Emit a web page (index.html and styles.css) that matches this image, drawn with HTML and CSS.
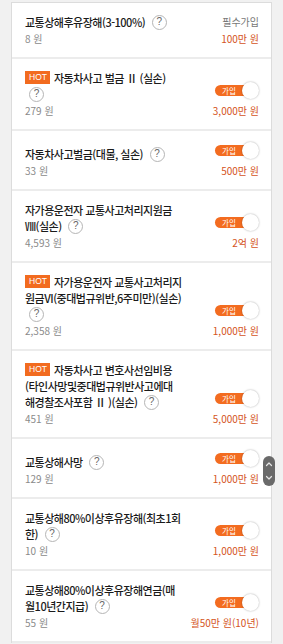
FILE: index.html
```html
<!DOCTYPE html>
<html lang="ko">
<head>
<meta charset="utf-8">
<title>특약 목록</title>
<link rel="stylesheet" href="styles.css">
</head>
<body>
<div class="card">
  <div class="row">
    <div class="info">
      <div class="title">교통상해후유장해(3-100%) <span class="help">?</span></div>
      <div class="price">8 원</div>
    </div>
    <div class="side">
      <div class="required">필수가입</div>
      <div class="amount">100만 원</div>
    </div>
  </div>

  <div class="row">
    <div class="info">
      <div class="title"><span class="hot">HOT</span>자동차사고 벌금 Ⅱ (실손) <span class="help">?</span></div>
      <div class="price">279 원</div>
    </div>
    <div class="side">
      <div class="toggle"><span class="pill">가입</span><span class="knob"></span></div>
      <div class="amount amount-t">3,000만 원</div>
    </div>
  </div>

  <div class="row">
    <div class="info">
      <div class="title">자동차사고벌금(대물, 실손) <span class="help">?</span></div>
      <div class="price">33 원</div>
    </div>
    <div class="side">
      <div class="toggle"><span class="pill">가입</span><span class="knob"></span></div>
      <div class="amount amount-t">500만 원</div>
    </div>
  </div>

  <div class="row">
    <div class="info">
      <div class="title">자가용운전자 교통사고처리지원금Ⅷ(실손) <span class="help">?</span></div>
      <div class="price">4,593 원</div>
    </div>
    <div class="side">
      <div class="toggle"><span class="pill">가입</span><span class="knob"></span></div>
      <div class="amount amount-t">2억 원</div>
    </div>
  </div>

  <div class="row">
    <div class="info">
      <div class="title"><span class="hot">HOT</span>자가용운전자 교통사고처리지원금VI(중대법규위반,6주미만)(실손) <span class="help">?</span></div>
      <div class="price">2,358 원</div>
    </div>
    <div class="side">
      <div class="toggle"><span class="pill">가입</span><span class="knob"></span></div>
      <div class="amount amount-t">1,000만 원</div>
    </div>
  </div>

  <div class="row">
    <div class="info">
      <div class="title"><span class="hot">HOT</span>자동차사고 변호사선임비용(타인사망및중대법규위반사고에대해경찰조사포함 Ⅱ )(실손) <span class="help">?</span></div>
      <div class="price">451 원</div>
    </div>
    <div class="side">
      <div class="toggle"><span class="pill">가입</span><span class="knob"></span></div>
      <div class="amount amount-t">5,000만 원</div>
    </div>
  </div>

  <div class="row">
    <div class="info">
      <div class="title">교통상해사망 <span class="help">?</span></div>
      <div class="price">129 원</div>
    </div>
    <div class="side">
      <div class="toggle"><span class="pill">가입</span><span class="knob"></span></div>
      <div class="amount amount-t">1,000만 원</div>
    </div>
  </div>

  <div class="row">
    <div class="info">
      <div class="title">교통상해80%이상후유장해(최초1회한) <span class="help">?</span></div>
      <div class="price">10 원</div>
    </div>
    <div class="side">
      <div class="toggle"><span class="pill">가입</span><span class="knob"></span></div>
      <div class="amount amount-t">1,000만 원</div>
    </div>
  </div>

  <div class="row">
    <div class="info">
      <div class="title">교통상해80%이상후유장해연금(매월10년간지급) <span class="help">?</span></div>
      <div class="price">55 원</div>
    </div>
    <div class="side">
      <div class="toggle"><span class="pill">가입</span><span class="knob"></span></div>
      <div class="amount amount-t">월50만 원(10년)</div>
    </div>
  </div>
</div>

<div class="scroll-thumb">
  <svg width="12" height="30" viewBox="0 0 12 30">
    <path d="M3.5 9.5 L6 7 L8.5 9.5" fill="none" stroke="#e6e6e6" stroke-width="1.2" stroke-linecap="round" stroke-linejoin="round"/>
    <path d="M3.5 20.5 L6 23 L8.5 20.5" fill="none" stroke="#e6e6e6" stroke-width="1.2" stroke-linecap="round" stroke-linejoin="round"/>
  </svg>
</div>
</body>
</html>
```

FILE: styles.css
```css
html {
  overflow: hidden;
}

body {
  margin: 0;
  padding: 2px 11px 0;
  background: #f1f1f1;
  font-family: "Noto Sans CJK KR", "Noto Sans", sans-serif;
  color: #222;
}

.card {
  background: #fff;
  border: 1px solid #dcdcdc;
  border-bottom: none;
  min-height: calc(100vh - 3px);
  box-sizing: border-box;
}

.row {
  display: flex;
  align-items: flex-end;
  padding: 11px 12px 11px 13px;
  border-bottom: 2px solid #ececec;
}

.info {
  flex: 0 0 157px;
  min-width: 0;
}

.title {
  font-size: 11px;
  font-weight: 500;
  line-height: 16px;
  letter-spacing: -0.5px;
  color: #1a1a1a;
}

.hot {
  display: inline-block;
  vertical-align: top;
  margin: 1px 4px 0 0;
  width: 25px;
  height: 13px;
  box-sizing: border-box;
  padding-left: 4px;
  background: #f26b1f;
  color: #fff;
  font-family: "Liberation Sans", sans-serif;
  font-size: 8.5px;
  font-weight: 400;
  line-height: 13px;
  letter-spacing: 0;
}

.help {
  display: inline-flex;
  align-items: center;
  justify-content: center;
  vertical-align: top;
  margin-top: 0.5px;
  margin-left: 4px;
  width: 15px;
  height: 15px;
  box-sizing: border-box;
  border: 1px solid #b5b5b5;
  border-radius: 50%;
  color: #666;
  font-family: "Liberation Sans", sans-serif;
  font-size: 10px;
  font-weight: 400;
  letter-spacing: 0;
  line-height: 1;
}

.price {
  margin-top: 2px;
  font-size: 10px;
  line-height: 14px;
  color: #8a8a8a;
}

.side {
  flex: 1 1 auto;
  min-width: 0;
  display: flex;
  flex-direction: column;
  align-items: flex-end;
}

.required {
  font-size: 10px;
  line-height: 16px;
  color: #777;
}

.amount {
  margin-top: 2px;
  font-size: 10px;
  line-height: 14px;
  color: #d4531c;
  white-space: nowrap;
}

.amount-t {
  margin-top: 5px;
}

.toggle {
  position: relative;
  width: 44px;
  height: 17px;
}

.pill {
  display: block;
  margin-top: 3px;
  width: 38px;
  height: 11px;
  border-radius: 6px;
  background: #f36c20;
  color: #fff;
  font-size: 7.5px;
  line-height: 11px;
  padding-left: 7px;
  box-sizing: border-box;
}

.knob {
  position: absolute;
  right: 0;
  top: 0;
  width: 17px;
  height: 17px;
  border-radius: 50%;
  background: #fff;
  box-shadow: 0 0 2px rgba(0, 0, 0, 0.35);
}

.scroll-thumb {
  position: fixed;
  left: 263px;
  top: 456px;
  width: 12px;
  height: 30px;
  border-radius: 6px;
  background: #6a6a6a;
}

.scroll-thumb svg {
  display: block;
}
```
